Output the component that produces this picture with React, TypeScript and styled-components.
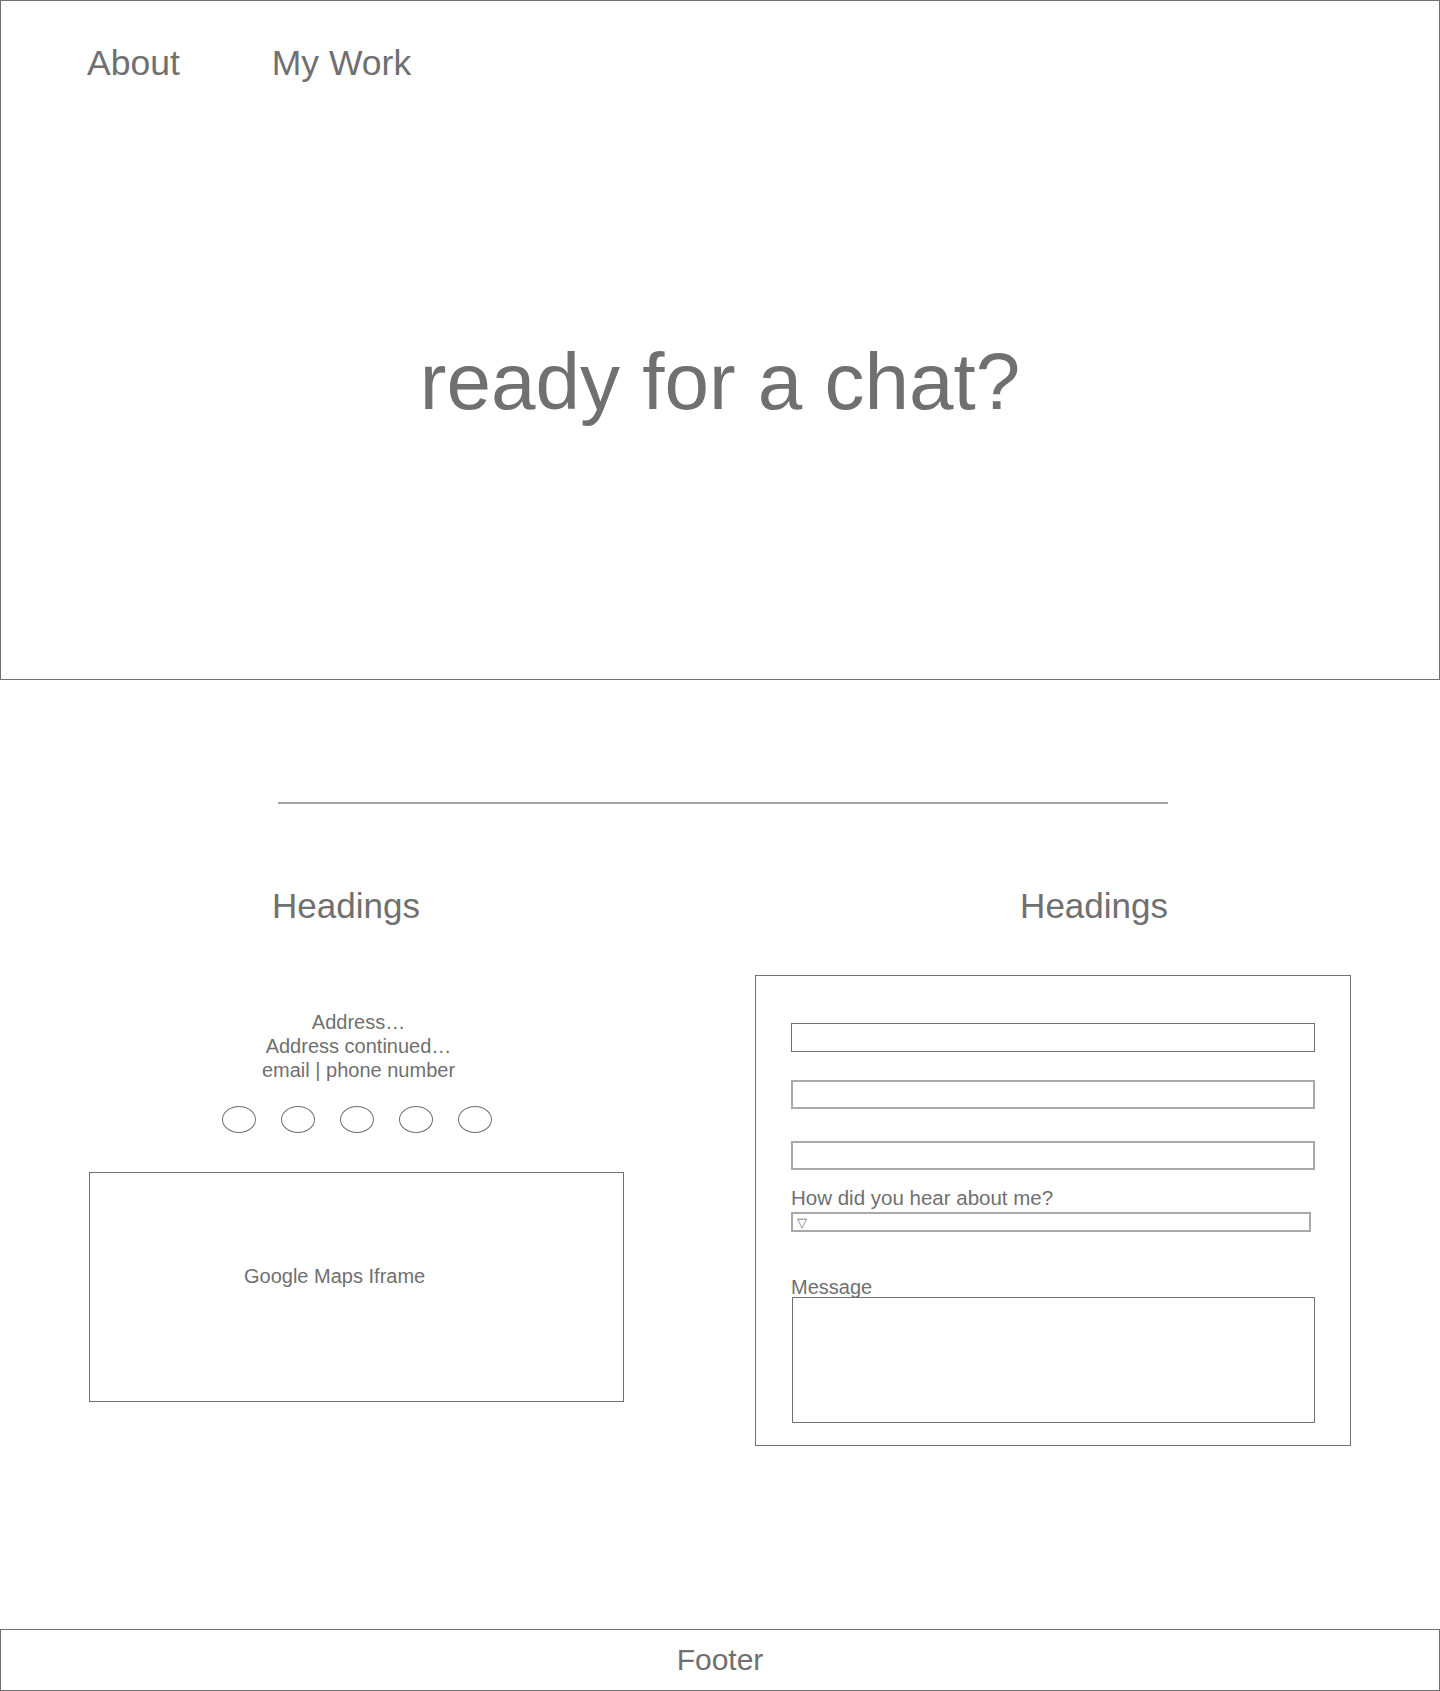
import { FC } from "react";
import styled, { createGlobalStyle } from "styled-components";

const GlobalStyle = createGlobalStyle`
  * {
    box-sizing: border-box;
  }
  body {
    margin: 0;
    background: #ffffff;
    color: #707070;
    font-family: "Liberation Sans", Arial, Helvetica, sans-serif;
  }
`;

const socials = [1, 2, 3, 4, 5];

const App: FC = () => {
  return (
    <Page>
      <GlobalStyle />
      <Hero>
        <Nav>
          <NavLink>About</NavLink>
          <NavLink>My Work</NavLink>
        </Nav>
        <HeroTitle>ready for a chat?</HeroTitle>
      </Hero>

      <Divider />

      <HeadingRow>
        <Heading>Headings</Heading>
        <Heading>Headings</Heading>
      </HeadingRow>

      <Columns>
        <LeftColumn>
          <Address>
            <div>Address…</div>
            <div>Address continued…</div>
            <div>email | phone number</div>
          </Address>
          <Socials>
            {socials.map((s) => (
              <Social key={s} />
            ))}
          </Socials>
          <MapBox>Google Maps Iframe</MapBox>
        </LeftColumn>

        <FormBox>
          <Input $gap={0} />
          <Input $gap={28} $soft />
          <Input $gap={32} $soft />
          <FieldLabel $size={20.5} $line={26} $gap={15}>
            How did you hear about me?
          </FieldLabel>
          <SelectBox>
            <Arrow>▽</Arrow>
          </SelectBox>
          <FieldLabel $size={20} $line={21} $gap={45}>
            Message
          </FieldLabel>
          <MessageArea />
        </FormBox>
      </Columns>

      <Footer>Footer</Footer>
    </Page>
  );
};

export default App;

const Page = styled.div`
  display: flex;
  flex-direction: column;
  width: 1440px;
`;

const Hero = styled.header`
  display: flex;
  flex-direction: column;
  height: 680px;
  border: 1px solid #707070;
`;

const Nav = styled.nav`
  display: flex;
  gap: 92px;
  padding: 42px 0 0 86px;
`;

const NavLink = styled.span`
  font-size: 35.5px;
  line-height: 40px;
`;

const HeroTitle = styled.h1`
  margin: 253px 0 0;
  text-align: center;
  font-size: 80px;
  font-weight: 400;
  line-height: 92px;
`;

const Divider = styled.div`
  height: 2px;
  margin: 122px 272px 0 278px;
  background: #a4a4a4;
`;

const HeadingRow = styled.div`
  display: flex;
  justify-content: space-between;
  margin-top: 82px;
  padding: 0 272px;
`;

const Heading = styled.h2`
  margin: 0;
  font-size: 35px;
  font-weight: 400;
  line-height: 40px;
`;

const Columns = styled.section`
  display: grid;
  grid-template-columns: 535px 596px;
  column-gap: 131px;
  align-items: start;
  margin-top: 49px;
  padding: 0 89px;
`;

const LeftColumn = styled.div`
  display: flex;
  flex-direction: column;
  align-items: center;
  padding-top: 35px;
`;

const Address = styled.div`
  font-size: 20px;
  line-height: 24px;
  text-align: center;
  margin-left: 4px;
`;

const Socials = styled.div`
  display: flex;
  gap: 25px;
  margin-top: 24px;
`;

const Social = styled.span`
  display: block;
  width: 34px;
  height: 27px;
  border: 1px solid #707070;
  border-radius: 50%;
`;

const MapBox = styled.div`
  align-self: stretch;
  height: 230px;
  margin-top: 39px;
  padding: 91px 0 0 154px;
  border: 1px solid #707070;
  font-size: 20px;
  line-height: 24px;
`;

const FormBox = styled.form`
  display: flex;
  flex-direction: column;
  height: 471px;
  padding: 47px 35px 0;
  border: 1px solid #707070;
`;

const Input = styled.input<{ $gap: number; $soft?: boolean }>`
  display: block;
  width: 524px;
  height: 29px;
  margin: ${(p) => p.$gap}px 0 0;
  padding: 0;
  border: ${(p) => (p.$soft ? "2px solid #a9a9a9" : "1px solid #707070")};
  background: #ffffff;
  outline: none;
`;

const FieldLabel = styled.label<{ $size: number; $line: number; $gap: number }>`
  display: block;
  margin-top: ${(p) => p.$gap}px;
  font-size: ${(p) => p.$size}px;
  line-height: ${(p) => p.$line}px;
`;

const SelectBox = styled.div`
  display: flex;
  align-items: center;
  width: 520px;
  height: 20px;
  margin-top: 1px;
  padding-left: 4px;
  border: 2px solid #a9a9a9;
`;

const Arrow = styled.span`
  font-family: "DejaVu Sans", sans-serif;
  font-size: 13px;
  line-height: 13px;
  color: #707070;
`;

const MessageArea = styled.textarea`
  display: block;
  width: 523px;
  height: 126px;
  margin: -1px 0 0 1px;
  padding: 0;
  border: 1px solid #707070;
  resize: none;
  outline: none;
`;

const Footer = styled.footer`
  display: flex;
  align-items: center;
  justify-content: center;
  height: 62px;
  margin-top: 183px;
  border: 1px solid #707070;
  font-size: 30px;
`;
